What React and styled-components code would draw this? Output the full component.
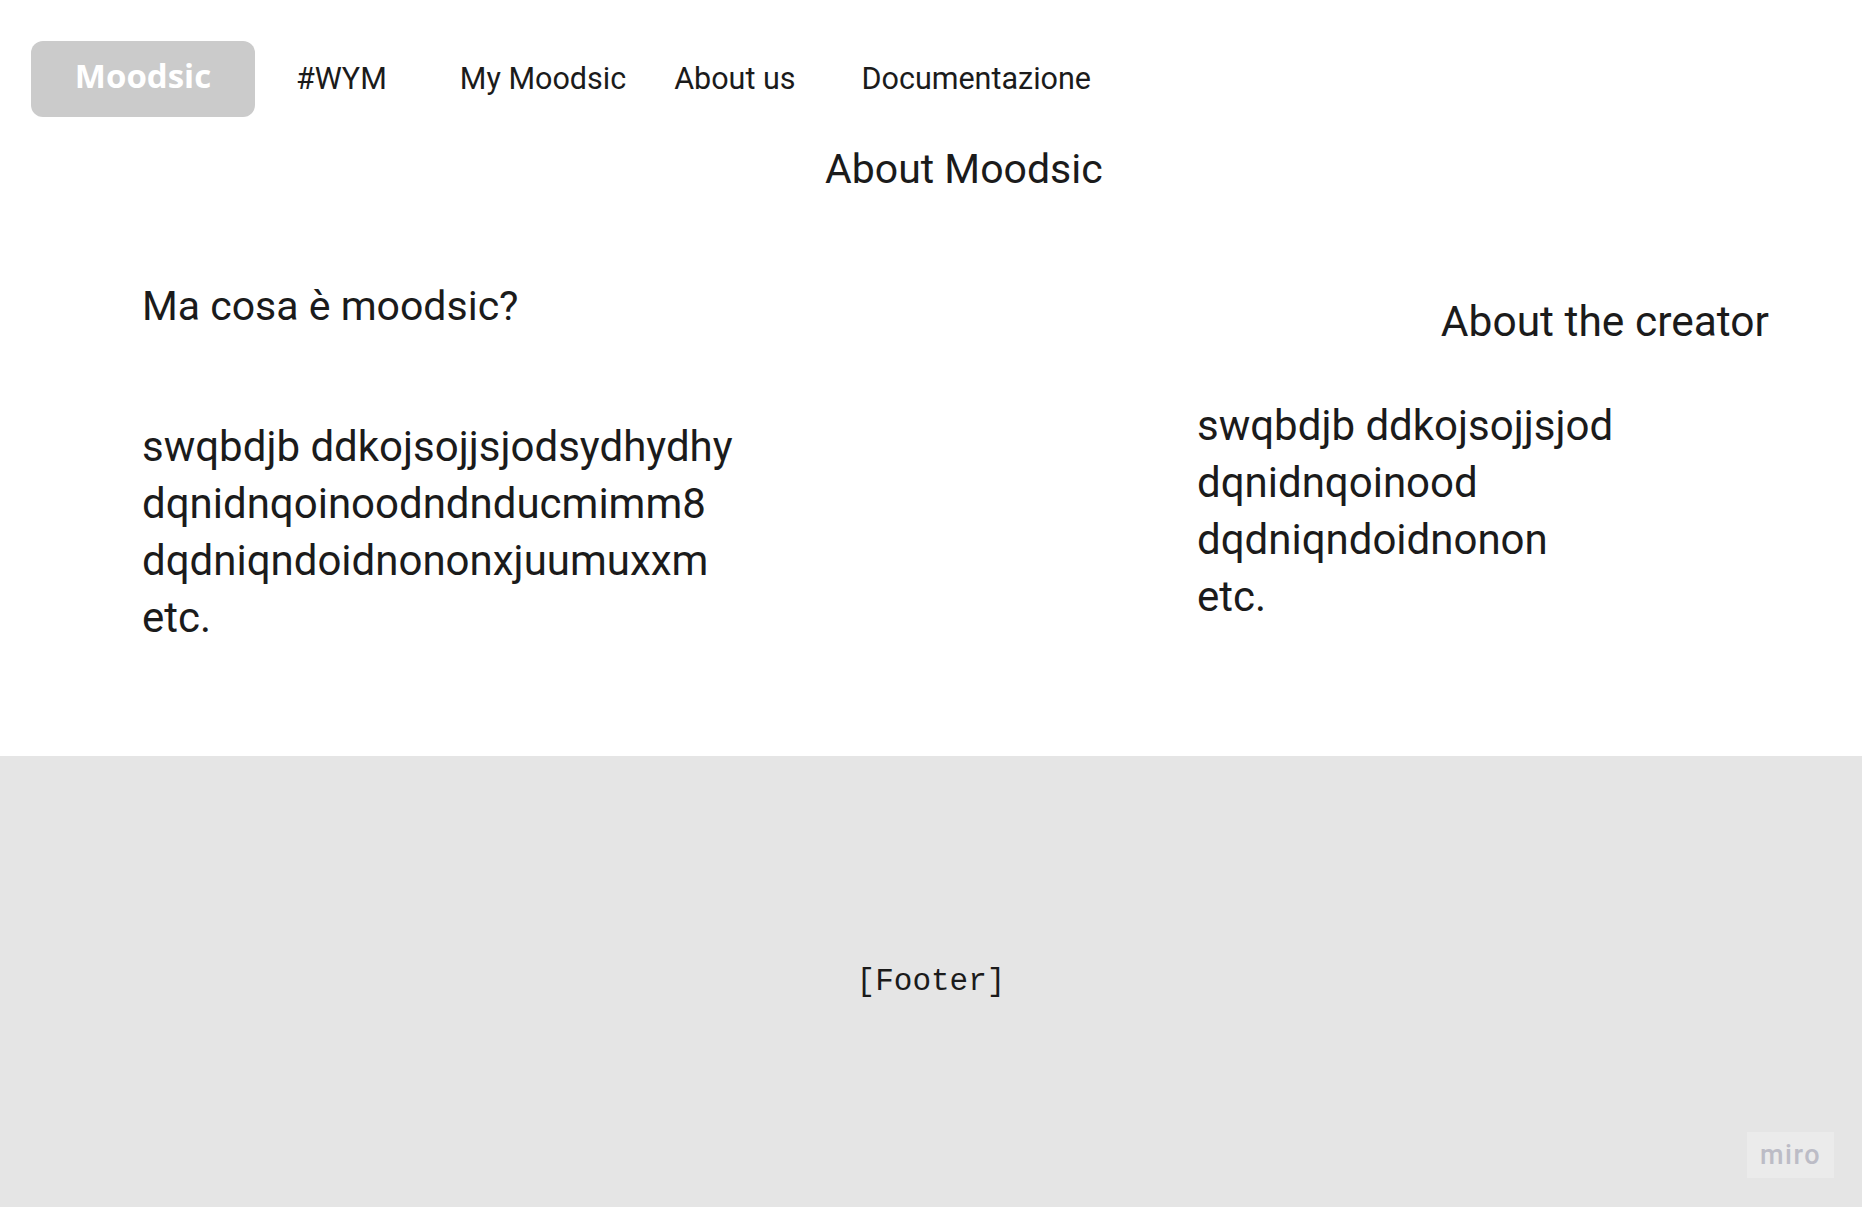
import React from "react";
import styled, { createGlobalStyle } from "styled-components";

const GlobalStyle = createGlobalStyle`
  html, body {
    margin: 0;
    padding: 0;
    background: #ffffff;
  }
  body {
    font-family: Roboto, "Liberation Sans", sans-serif;
    color: #1b1b1b;
  }
`;

const Page = styled.div`
  position: relative;
  min-height: 1207px;
  display: flex;
  flex-direction: column;
`;

const Header = styled.header`
  display: flex;
  align-items: center;
  padding: 41px 31px 0;
`;

const Logo = styled.div`
  width: 224px;
  height: 76px;
  border-radius: 12px;
  background: #cbcbcb;
  color: #ffffff;
  font-family: "Open Sans", sans-serif;
  font-weight: 700;
  font-size: 33px;
  display: flex;
  align-items: center;
  justify-content: center;
  padding-bottom: 8px;
  box-sizing: border-box;
`;

const NavLink = styled.a`
  margin-left: ${(p) => p.$ml}px;
  font-size: 30.5px;
  color: #1b1b1b;
  text-decoration: none;
  line-height: 1;
`;

const Title = styled.h1`
  margin: 27px 0 0;
  padding-left: 825px;
  font-size: 41px;
  font-weight: 400;
  line-height: 50px;
`;

const Columns = styled.section`
  display: flex;
  justify-content: space-between;
  align-items: flex-start;
  padding: 87px 93px 110px 142px;
`;

const Column = styled.div`
  width: ${(p) => p.$width || "auto"};
  padding-top: ${(p) => p.$top || 0}px;
  display: flex;
  flex-direction: column;
`;

const Heading = styled.h2`
  margin: 0;
  font-size: ${(p) => p.$size || 41}px;
  font-weight: 400;
  line-height: 50px;
  text-align: ${(p) => p.$align || "left"};
`;

const Body = styled.p`
  margin: ${(p) => p.$gap}px 0 0;
  font-size: 42px;
  line-height: 57px;
`;

const Footer = styled.footer`
  flex: 1;
  background: #e5e5e5;
  display: flex;
  align-items: center;
  justify-content: center;
  font-family: "Liberation Mono", monospace;
  font-size: 31px;
  color: #1b1b1b;
`;

const Badge = styled.div`
  position: absolute;
  right: 28px;
  bottom: 29px;
  width: 87px;
  height: 46px;
  background: #ebebeb;
  color: #bcbcc6;
  font-family: Roboto, sans-serif;
  font-weight: 500;
  font-size: 27px;
  letter-spacing: 1.5px;
  display: flex;
  align-items: center;
  justify-content: center;
`;

const App = () => {
  return (
    <Page>
      <GlobalStyle />
      <Header>
        <Logo>Moodsic</Logo>
        <NavLink $ml={41}>#WYM</NavLink>
        <NavLink $ml={73}>My Moodsic</NavLink>
        <NavLink $ml={48}>About us</NavLink>
        <NavLink $ml={66}>Documentazione</NavLink>
      </Header>
      <Title>About Moodsic</Title>
      <Columns>
        <Column>
          <Heading>Ma cosa è moodsic?</Heading>
          <Body $gap={87}>
            swqbdjb ddkojsojjsjodsydhydhy
            <br />
            dqnidnqoinoodndnducmimm8
            <br />
            dqdniqndoidnononxjuumuxxm
            <br />
            etc.
          </Body>
        </Column>
        <Column $width="572px" $top={16}>
          <Heading $align="right" $size={42.5}>
            About the creator
          </Heading>
          <Body $gap={50}>
            swqbdjb ddkojsojjsjod
            <br />
            dqnidnqoinood
            <br />
            dqdniqndoidnonon
            <br />
            etc.
          </Body>
        </Column>
      </Columns>
      <Footer>[Footer]</Footer>
      <Badge>miro</Badge>
    </Page>
  );
};

export default App;
